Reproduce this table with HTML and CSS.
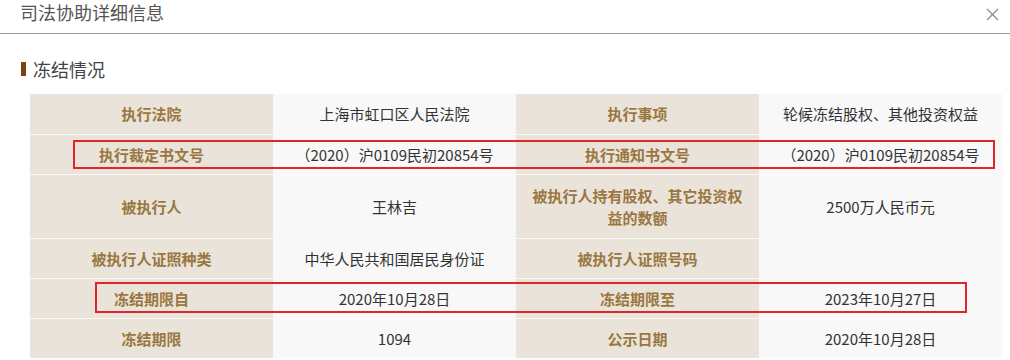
FILE: index.html
```html
<!DOCTYPE html>
<html lang="zh">
<head>
<meta charset="utf-8">
<title>司法协助详细信息</title>
<link rel="stylesheet" href="styles.css">
</head>
<body>
<div class="dialog">
  <div class="header">
    <span class="title">司法协助详细信息</span>
    <span class="close" aria-label="关闭">
      <svg width="13" height="13" viewBox="0 0 13 13"><path d="M1 1 L12 12 M12 1 L1 12" stroke="#8a8a8a" stroke-width="1.2" fill="none"/></svg>
    </span>
  </div>
  <div class="section">
    <h3 class="section-title"><span class="marker"></span>冻结情况</h3>
    <div class="table-wrap">
      <table class="info">
        <tr class="row">
          <td class="label">执行法院</td>
          <td class="value">上海市虹口区人民法院</td>
          <td class="label">执行事项</td>
          <td class="value">轮候冻结股权、其他投资权益</td>
        </tr>
        <tr class="row">
          <td class="label">执行裁定书文号</td>
          <td class="value">（2020）沪0109民初20854号</td>
          <td class="label">执行通知书文号</td>
          <td class="value">（2020）沪0109民初20854号</td>
        </tr>
        <tr class="row tall">
          <td class="label">被执行人</td>
          <td class="value">王林吉</td>
          <td class="label">被执行人持有股权、其它投资权益的数额</td>
          <td class="value">2500万人民币元</td>
        </tr>
        <tr class="row">
          <td class="label">被执行人证照种类</td>
          <td class="value">中华人民共和国居民身份证</td>
          <td class="label">被执行人证照号码</td>
          <td class="value"></td>
        </tr>
        <tr class="row">
          <td class="label">冻结期限自</td>
          <td class="value">2020年10月28日</td>
          <td class="label">冻结期限至</td>
          <td class="value">2023年10月27日</td>
        </tr>
        <tr class="row">
          <td class="label">冻结期限</td>
          <td class="value">1094</td>
          <td class="label">公示日期</td>
          <td class="value">2020年10月28日</td>
        </tr>
      </table>
      <div class="mark mark-1"></div>
      <div class="mark mark-2"></div>
    </div>
  </div>
</div>
</body>
</html>
```

FILE: styles.css
```css
html, body {
  margin: 0;
  padding: 0;
  background: #fff;
}
body {
  font-family: "Noto Sans CJK SC", "Microsoft YaHei", sans-serif;
  color: #333;
}
.dialog {
  width: 1010px;
  height: 360px;
  overflow: hidden;
}
.header {
  height: 34px;
  border-bottom: 1px solid #9c9c9c;
  display: flex;
  justify-content: space-between;
  align-items: flex-start;
  box-sizing: border-box;
}
.title {
  padding-left: 20px;
  font-size: 18px;
  line-height: 24px;
  color: #555;
}
.close {
  margin-right: 11px;
  margin-top: 8px;
  width: 13px;
  height: 13px;
  display: flex;
}
.section {
  padding: 0 8px 0 21px;
}
.section-title {
  margin: 23px 0 0 0;
  height: 24px;
  display: flex;
  align-items: center;
  font-size: 18px;
  font-weight: normal;
  color: #444;
  line-height: 24px;
}
.marker {
  display: inline-block;
  width: 5px;
  height: 14px;
  background: #7a4410;
  margin-right: 7px;
}
.table-wrap {
  position: relative;
  margin: 13px 0 0 9px;
  width: 972px;
}
.info {
  width: 972px;
  border-collapse: separate;
  border-spacing: 0;
  table-layout: fixed;
  font-size: 15px;
}
.info td {
  height: 39px;
  padding: 0 12px;
  text-align: center;
  vertical-align: middle;
  border-top: 1px solid #fbf9f6;
  line-height: 22px;
  box-sizing: content-box;
}
.info tr:first-child td {
  border-top: none;
  height: 40px;
}
.info .tall td {
  height: 63px;
}
.label {
  background: #e9e3d9;
  color: #9a7740;
  font-weight: bold;
}
.value {
  background: #f8f8f8;
  color: #333;
}
.mark {
  position: absolute;
  border: 2px solid #e0262a;
  box-sizing: border-box;
  pointer-events: none;
}
.mark-1 {
  left: 43px;
  top: 46px;
  width: 922px;
  height: 29px;
}
.mark-2 {
  left: 65px;
  top: 188px;
  width: 872px;
  height: 31px;
}
```
